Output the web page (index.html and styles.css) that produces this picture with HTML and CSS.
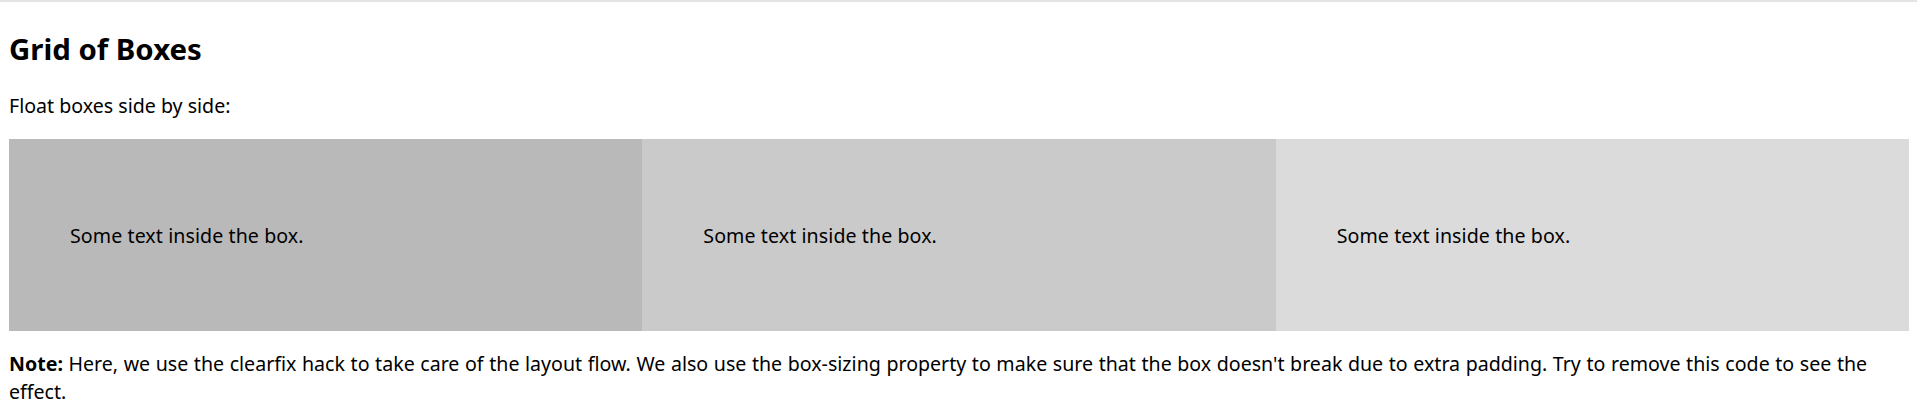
FILE: index.html
```
<!DOCTYPE html>
<html lang="en">
<head>
<meta charset="utf-8">
<title>Grid of Boxes</title>
<link rel="stylesheet" href="styles.css">
</head>
<body>
<div class="topline"></div>
<main class="page">
  <h2 class="title">Grid of Boxes</h2>
  <p class="text">Float boxes side by side:</p>
  <div class="grid">
    <div class="box box-1"><p>Some text inside the box.</p></div>
    <div class="box box-2"><p>Some text inside the box.</p></div>
    <div class="box box-3"><p>Some text inside the box.</p></div>
  </div>
  <p class="text note"><b class="label">Note:</b> Here, we use the clearfix hack to take care of the layout flow. We also use the box-sizing property to make sure that the box doesn't break due to extra padding. Try to remove this code to see the effect.</p>
</main>
</body>
</html>
```
FILE: styles.css
```
* {
  box-sizing: border-box;
}

html, body {
  margin: 0;
  padding: 0;
  background: #ffffff;
}

body {
  font-family: "Noto Sans", "Noto Sans CJK KR", sans-serif;
  font-size: 19.6px;
  color: #000;
}

.topline {
  height: 2px;
  background: #e4e4e4;
}

.page {
  padding: 0 8px 0 9px;
}

.title {
  font-size: 29.4px;
  font-weight: 700;
  line-height: 37.6px;
  margin: 29px 0 23px;
}

.text {
  line-height: 27.7px;
  margin: 0 0 19.4px;
}

.note {
  margin: 19.6px 0 0;
  word-spacing: 0.5px;
}

.label {
  font-weight: 700;
}

.grid {
  display: flex;
}

.box {
  flex: 1 1 0;
  padding: 61px;
}

.box p {
  margin: 21.5px 0 17.5px;
  line-height: 30.9px;
  letter-spacing: 0.08px;
}

.box-1 { background: #b9b9b9; }
.box-2 { background: #cacaca; }
.box-3 { background: #dbdbdb; }
```
